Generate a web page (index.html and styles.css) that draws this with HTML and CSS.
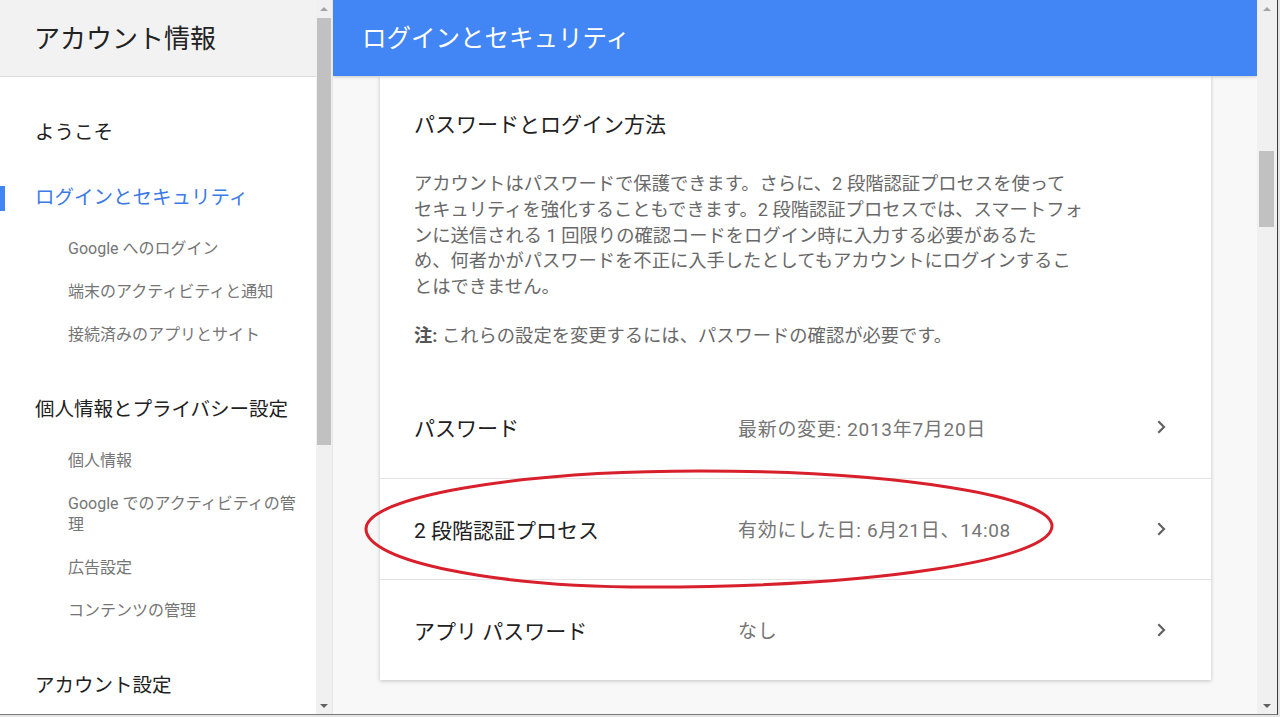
FILE: index.html
```html
<!DOCTYPE html>
<html lang="ja">
<head>
<meta charset="utf-8">
<title>ログインとセキュリティ</title>
<link rel="stylesheet" href="styles.css">
</head>
<body>
<div class="window">
  <aside class="sidebar">
    <div class="side-pane">
      <div class="side-header">アカウント情報</div>
      <nav class="nav">
        <a class="nav-top">ようこそ</a>
        <section class="nav-group">
          <a class="nav-head active">ログインとセキュリティ</a>
          <ul class="nav-subs">
            <li>Google へのログイン</li>
            <li>端末のアクティビティと通知</li>
            <li>接続済みのアプリとサイト</li>
          </ul>
        </section>
        <section class="nav-group">
          <a class="nav-head">個人情報とプライバシー設定</a>
          <ul class="nav-subs">
            <li>個人情報</li>
            <li>Google でのアクティビティの管理</li>
            <li>広告設定</li>
            <li>コンテンツの管理</li>
          </ul>
        </section>
        <section class="nav-group">
          <a class="nav-head">アカウント設定</a>
        </section>
      </nav>
    </div>
    <div class="scrollbar scrollbar-left">
      <span class="arrow up"></span>
      <div class="track"><div class="thumb thumb-left"></div></div>
      <span class="arrow down"></span>
    </div>
  </aside>

  <main class="main">
    <div class="main-pane">
      <header class="topbar">ログインとセキュリティ</header>
      <div class="content">
        <div class="card">
          <div class="intro">
            <h2 class="card-title">パスワードとログイン方法</h2>
            <p class="desc">アカウントはパスワードで保護できます。さらに、2 段階認証プロセスを使って<br>セキュリティを強化することもできます。2 段階認証プロセスでは、スマートフォ<br>ンに送信される 1 回限りの確認コードをログイン時に入力する必要があるた<br>め、何者かがパスワードを不正に入手したとしてもアカウントにログインするこ<br>とはできません。</p>
            <p class="desc note"><b>注:</b> これらの設定を変更するには、パスワードの確認が必要です。</p>
          </div>
          <div class="rows">
            <div class="row">
              <span class="row-label">パスワード</span>
              <span class="row-value">最新の変更: 2013年7月20日</span>
              <svg class="chev" viewBox="0 0 24 24" width="24" height="24"><path d="M9.3 6.3 15 12l-5.7 5.7" fill="none" stroke="#616161" stroke-width="2.2"/></svg>
            </div>
            <div class="row row-marked">
              <span class="row-label">2 段階認証プロセス</span>
              <span class="row-value">有効にした日: 6月21日、14:08</span>
              <svg class="chev" viewBox="0 0 24 24" width="24" height="24"><path d="M9.3 6.3 15 12l-5.7 5.7" fill="none" stroke="#616161" stroke-width="2.2"/></svg>
              <svg class="annotation" viewBox="0 0 692 122" width="692" height="122"><path d="M3,61 C3,29 153,3 337,3 C531,3 689,28 689,58 C689,92 509,119 287,119 C130,119 3,93 3,61 Z" fill="none" stroke="#d7202b" stroke-width="3"/></svg>
            </div>
            <div class="row">
              <span class="row-label">アプリ パスワード</span>
              <span class="row-value">なし</span>
              <svg class="chev" viewBox="0 0 24 24" width="24" height="24"><path d="M9.3 6.3 15 12l-5.7 5.7" fill="none" stroke="#616161" stroke-width="2.2"/></svg>
            </div>
          </div>
        </div>
      </div>
    </div>
    <div class="scrollbar scrollbar-right">
      <span class="arrow up"></span>
      <div class="track"><div class="thumb thumb-right"></div></div>
      <span class="arrow down"></span>
    </div>
  </main>
</div>
</body>
</html>
```

FILE: styles.css
```css
* { box-sizing: border-box; }

html, body {
  margin: 0;
  padding: 0;
}

body {
  width: 1280px;
  height: 717px;
  overflow: hidden;
  background: #e4e4e4;
  font-family: "Roboto", "Noto Sans CJK JP", sans-serif;
  color: #212121;
}

.window {
  display: flex;
  width: 1278px;
  height: 715px;
  border-right: 1px solid #3c3c3c;
  border-bottom: 1px solid #7b7b7b;
  background: #fff;
}

/* ---------- sidebar ---------- */
.sidebar {
  display: flex;
  width: 333px;
  flex: none;
  background: #fff;
}

.side-pane {
  width: 316px;
  overflow: hidden;
}

.side-header {
  height: 77px;
  background: #f2f2f2;
  border-bottom: 1px solid #dcdcdc;
  padding-left: 34px;
  font-size: 26px;
  line-height: 78px;
  color: #222;
}

.nav {
  display: flex;
  flex-direction: column;
  padding-top: 43px;
}

.nav a {
  display: block;
  text-decoration: none;
  color: #212121;
}

.nav-top,
.nav-head {
  position: relative;
  padding-left: 35px;
  font-size: 19.5px;
  line-height: 26px;
}

.nav-group {
  margin-top: 52px;
}

.nav-top + .nav-group {
  margin-top: 39px;
}

.nav-head.active {
  color: #3b7ae8;
}

.nav-head.active::before {
  content: "";
  position: absolute;
  left: 0;
  top: 1px;
  width: 5px;
  height: 25px;
  background: #4285f4;
}

.nav-subs {
  list-style: none;
  margin: 27px 0 0;
  padding: 0 8px 0 68px;
  display: flex;
  flex-direction: column;
  gap: 22px;
}

.nav-subs li {
  font-size: 16px;
  line-height: 21px;
  color: #757575;
}

/* ---------- fake scrollbars ---------- */
.scrollbar {
  position: relative;
  display: flex;
  flex-direction: column;
  background: #f0f0f0;
  flex: none;
}

.scrollbar-left {
  width: 17px;
  border-right: 1px solid #e6e6e6;
}

.scrollbar-right {
  width: 20px;
}

.scrollbar .track {
  flex: 1;
  position: relative;
}

.arrow {
  display: block;
  height: 17px;
  position: relative;
}

.arrow::after {
  content: "";
  position: absolute;
  left: 50%;
  top: 50%;
  margin-left: -4px;
  margin-top: -2px;
  border-left: 4px solid transparent;
  border-right: 4px solid transparent;
}

.arrow.up::after {
  border-bottom: 4px solid #a3a3a3;
}

.arrow.down::after {
  border-top: 4px solid #606060;
}

.thumb {
  position: absolute;
  background: #c1c1c1;
}

.thumb-left {
  left: 1px;
  right: 1px;
  top: 1px;
  height: 427px;
}

.thumb-right {
  left: 2px;
  width: 15px;
  top: 134px;
  height: 76px;
}

/* ---------- main ---------- */
.main {
  flex: 1;
  display: flex;
  min-width: 0;
}

.main-pane {
  flex: 1;
  display: flex;
  flex-direction: column;
  background: #f8f8f8;
  overflow: hidden;
}

.topbar {
  position: relative;
  z-index: 2;
  height: 76px;
  flex: none;
  background: #4285f4;
  color: #fff;
  font-size: 24.5px;
  line-height: 78px;
  padding-left: 29px;
  box-shadow: 0 1px 3px rgba(0, 0, 0, 0.2);
}

.content {
  flex: 1;
  padding: 0 46px 0 47px;
}

.card {
  position: relative;
  background: #fff;
  box-shadow: 0 1px 4px rgba(0, 0, 0, 0.22);
  padding-top: 34px;
}

.intro {
  padding: 0 34px;
}

.card-title {
  margin: 0;
  font-weight: normal;
  font-size: 21px;
  line-height: 30px;
  color: #212121;
}

.desc {
  margin: 31px 0 0;
  width: 720px;
  font-size: 18.3px;
  line-height: 25.8px;
  color: #686868;
}

.desc.note {
  margin-top: 23px;
}

.desc.note b {
  color: #555;
}

.rows {
  margin-top: 28px;
}

.row {
  position: relative;
  display: grid;
  grid-template-columns: 324px 1fr 24px;
  align-items: center;
  height: 101px;
  padding: 0 38px 0 34px;
}

.row + .row {
  border-top: 1px solid #e3e3e3;
}

.row-label {
  font-size: 21px;
  color: #212121;
}

.row-value {
  font-size: 19px;
  letter-spacing: 0.7px;
  color: #757575;
}

.chev {
  display: block;
}

.annotation {
  position: absolute;
  left: -17px;
  top: -11px;
  z-index: 3;
  overflow: visible;
  pointer-events: none;
}
```
